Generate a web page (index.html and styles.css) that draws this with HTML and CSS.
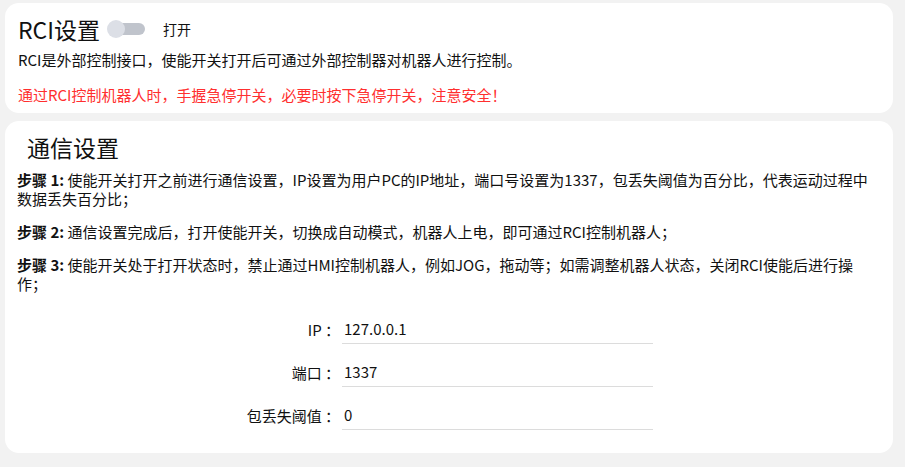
FILE: index.html
```html
<!DOCTYPE html>
<html>
<head>
  <meta charset="UTF-8">
  <title>RCI设置</title>
  <link rel="stylesheet" href="styles.css">
</head>
<body>
  <div class="page">
    <!-- RCI enable -->
    <section class="card rci-card">
      <div class="rci-head">
        <h2 class="rci-title">RCI设置</h2>
        <span class="switch"><span class="switch-core"></span></span>
        <span class="switch-label">打开</span>
      </div>
      <p class="desc">RCI是外部控制接口，使能开关打开后可通过外部控制器对机器人进行控制。</p>
      <p class="warn">通过RCI控制机器人时，手握急停开关，必要时按下急停开关，注意安全！</p>
    </section>
    <!-- Communication settings -->
    <section class="card comm-card">
      <h2 class="comm-title">通信设置</h2>
      <p class="step"><b>步骤 1:</b> 使能开关打开之前进行通信设置，IP设置为用户PC的IP地址，端口号设置为1337，包丢失阈值为百分比，代表运动过程中数据丢失百分比；</p>
      <p class="step"><b>步骤 2:</b> 通信设置完成后，打开使能开关，切换成自动模式，机器人上电，即可通过RCI控制机器人；</p>
      <p class="step"><b>步骤 3:</b> 使能开关处于打开状态时，禁止通过HMI控制机器人，例如JOG，拖动等；如需调整机器人状态，关闭RCI使能后进行操作；</p>
      <form class="comm-form">
        <div class="form-row">
          <label class="form-label">IP ：</label>
          <input class="form-input" type="text" value="127.0.0.1">
        </div>
        <div class="form-row">
          <label class="form-label">端口 ：</label>
          <input class="form-input" type="text" value="1337">
        </div>
        <div class="form-row">
          <label class="form-label">包丢失阈值 ：</label>
          <input class="form-input" type="text" value="0">
        </div>
      </form>
    </section>
  </div>
</body>
</html>
```

FILE: styles.css
```css
html, body {
  margin: 0;
  background-color: #f2f2f2;
}
body {
  font-family: "Noto Sans CJK SC", "Noto Sans", sans-serif;
  font-size: 15px;
  color: #111;
}
.page {
  display: flex;
  flex-direction: column;
  gap: 8px;
  padding: 3px 12px 0 5px;
}
.card {
  background-color: #fff;
  border-radius: 14px;
}
/* RCI card */
.rci-card {
  padding: 13px 13px 8px 13px;
  height: 89px;
}
.rci-head {
  display: flex;
  align-items: center;
  height: 26px;
}
.rci-title {
  margin: 0;
  font-size: 23px;
  font-weight: normal;
  line-height: 26px;
}
.switch {
  position: relative;
  display: inline-block;
  width: 38px;
  height: 18px;
  margin-left: 7px;
}
.switch-core {
  position: absolute;
  left: 6px;
  top: 3px;
  width: 32px;
  height: 12px;
  border-radius: 6px;
  background-color: #c0c4cc;
}
.switch::before {
  content: "";
  position: absolute;
  left: 0;
  top: 0;
  width: 18px;
  height: 18px;
  border-radius: 50%;
  background-color: #dcdfe6;
  z-index: 1;
}
.switch-label {
  margin-left: 18px;
  font-size: 14px;
}
.desc {
  margin: 8px 0 0;
  line-height: 19px;
}
.warn {
  margin: 16px 0 0;
  line-height: 19px;
  color: #ff2f2f;
}
/* Communication card */
.comm-card {
  padding: 13px 23px 23px 12px;
}
.comm-title {
  margin: 0 0 10px;
  padding-left: 10px;
  font-size: 23px;
  font-weight: normal;
  line-height: 26px;
}
.step {
  margin: 0 0 14px;
  line-height: 19px;
}
.step b {
  font-weight: bold;
}
.comm-form {
  display: flex;
  flex-direction: column;
  gap: 13px;
  margin-top: 21px;
  padding-left: 218px;
}
.form-row {
  display: flex;
  align-items: center;
}
.form-label {
  width: 105px;
  text-align: right;
}
.form-input {
  width: 311px;
  height: 30px;
  box-sizing: border-box;
  margin-left: 2px;
  padding: 0 2px;
  border: none;
  border-bottom: 1px solid #dcdcdc;
  outline: none;
  font-family: inherit;
  font-size: 15px;
  color: #111;
  background: transparent;
}
```
